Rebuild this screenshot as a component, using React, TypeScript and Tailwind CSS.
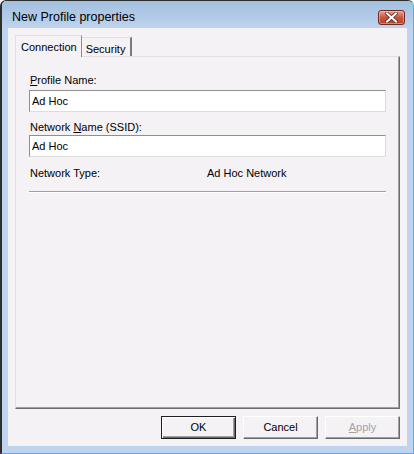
const dlg = { fontFamily: '"Liberation Sans", Arial, sans-serif' }

function CloseButton() {
  return (
    <div className="flex h-[15px] w-[27px] items-center justify-center rounded-[3px] border border-[#6e2a1f] bg-gradient-to-b from-[#e8a294] via-[#c9553e] to-[#b8412a] shadow-[inset_0_0_0_1px_rgba(255,220,210,0.45)]">
      <svg width="13" height="11" viewBox="0 0 13 11">
        <path d="M2 1.5 L11 9.5 M11 1.5 L2 9.5" stroke="#5a2a22" strokeWidth="3.6" strokeLinecap="square" />
        <path d="M2 1.5 L11 9.5 M11 1.5 L2 9.5" stroke="#ffffff" strokeWidth="2" strokeLinecap="square" />
      </svg>
    </div>
  )
}

function TextBox({ value }: { value: string }) {
  return (
    <div className="flex h-[22px] items-center border border-t-[#8f8f8f] border-l-[#8f8f8f] border-r-[#dcdcdc] border-b-[#dcdcdc] bg-white pl-[2px] text-[11px] text-black">
      {value}
    </div>
  )
}

function DlgButton({ children, primary, disabled }: { children: React.ReactNode; primary?: boolean; disabled?: boolean }) {
  return (
    <div
      className={`flex h-[23px] w-[75px] items-center justify-center text-[11px] ${
        primary
          ? 'border border-[#1e1e1e] shadow-[inset_1px_1px_0_#ffffff,inset_-1px_-1px_0_#696969,inset_-2px_-2px_0_#a0a0a0]'
          : 'border border-t-white border-l-white border-r-[#696969] border-b-[#696969] shadow-[inset_-1px_-1px_0_#a0a0a0]'
      } ${disabled ? 'text-[#a3a1a3]' : 'text-black'}`}
    >
      {children}
    </div>
  )
}

export default function App() {
  return (
    <div className="h-[454px] w-[414px] bg-white" style={dlg}>
      <div className="flex h-full w-full flex-col overflow-hidden rounded-t-[6px] border-t border-l-2 border-[#2e2e2e] border-r border-r-[#25c7d8] border-b border-b-[#25c7d8] bg-[#bfd5ef]">
        {/* title bar */}
        <div className="flex h-[27px] shrink-0 items-start justify-between bg-gradient-to-b from-[#a3bfdf] to-[#bed3ed] pl-[10px] pr-[8px]">
          <span className="mt-[9px] text-[12.5px] leading-[15px] text-black">New Profile properties</span>
          <div className="mt-[9px]">
            <CloseButton />
          </div>
        </div>

        {/* client */}
        <div className="mx-[6px] mb-[7px] flex flex-1 flex-col bg-[#f5f2f5] px-[7px] pt-[7px]">
          {/* tabs */}
          <div className="flex h-[21px] items-end">
            <div className="relative z-10 -mb-px flex h-[22px] items-start border-t border-l border-[#e2dfe2] border-r border-r-[#8c8c8c] bg-[#f5f2f5] pl-[5px] pr-[4px] pt-[3px] text-[11px] text-black">
              Connection
            </div>
            <div className="flex h-[19px] items-start border-t border-[#e2dfe2] border-r-2 border-r-[#7a7a7a] bg-[#f5f2f5] pl-[4px] pr-[5px] pt-[3px] text-[11px] text-black">
              Security
            </div>
          </div>

          {/* panel */}
          <div className="flex h-[353px] flex-col border-t border-l border-[#e2dfe2] border-r border-r-[#6d6d6d] border-b border-b-[#6d6d6d] pl-[13px] pr-[13px] pt-[17px] shadow-[inset_-1px_-1px_0_#a0a0a0] text-[11px] text-black">
            <div className="ml-px h-[13px] leading-[13px]">
              <span className="underline underline-offset-[1px]">P</span>rofile Name:
            </div>
            <div className="mt-[3px]">
              <TextBox value="Ad Hoc" />
            </div>
            <div className="ml-px mt-[9px] h-[13px] leading-[13px]">
              Network <span className="underline underline-offset-[1px]">N</span>ame (SSID):
            </div>
            <div className="mt-px">
              <TextBox value="Ad Hoc" />
            </div>
            <div className="ml-px mt-[10px] flex h-[13px] leading-[13px]">
              <span className="w-[177px]">Network Type:</span>
              <span>Ad Hoc Network</span>
            </div>
            <div className="mt-[11px] h-[2px] border-t border-[#a0a0a0] border-b border-b-white" />
          </div>

          {/* buttons */}
          <div className="mt-[7px] flex justify-end gap-[7px]">
            <DlgButton primary>OK</DlgButton>
            <DlgButton>Cancel</DlgButton>
            <DlgButton disabled>
              <span>
                <span className="underline underline-offset-[1px]">A</span>pply
              </span>
            </DlgButton>
          </div>
        </div>
      </div>
    </div>
  )
}
